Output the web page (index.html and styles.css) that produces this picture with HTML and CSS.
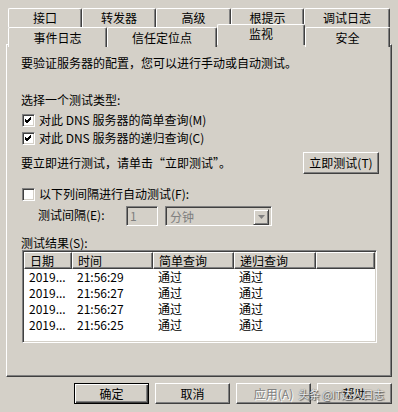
FILE: index.html
```html
<!DOCTYPE html>
<html lang="zh-CN">
<head>
  <meta charset="UTF-8" />
  <title>监视</title>
  <link rel="stylesheet" href="styles.css">
</head>
<body>
  <div class="dialog">
    <div class="tabs">
      <div class="tab-row row1">
        <div class="tab">接口</div>
        <div class="tab">转发器</div>
        <div class="tab">高级</div>
        <div class="tab">根提示</div>
        <div class="tab">调试日志</div>
      </div>
      <div class="tab-row row2">
        <div class="tab">事件日志</div>
        <div class="tab">信任定位点</div>
        <div class="tab active">监视</div>
        <div class="tab">安全</div>
      </div>
    </div>

    <div class="panel">
      <p class="intro">要验证服务器的配置，您可以进行手动或自动测试。</p>

      <p class="caption">选择一个测试类型:</p>
      <label class="check first">
        <span class="box"><svg viewBox="0 0 7 7" width="7" height="7"><path d="M0 2 L2 4 L6 0 M0 3 L2 5 L6 1 M0 4 L2 6 L6 2" stroke="#000" stroke-width="1" fill="none"/></svg></span>
        对此 DNS 服务器的简单查询(M)
      </label>
      <label class="check">
        <span class="box"><svg viewBox="0 0 7 7" width="7" height="7"><path d="M0 2 L2 4 L6 0 M0 3 L2 5 L6 1 M0 4 L2 6 L6 2" stroke="#000" stroke-width="1" fill="none"/></svg></span>
        对此 DNS 服务器的递归查询(C)
      </label>

      <div class="test-now">
        <span>要立即进行测试，请单击“立即测试”。</span>
        <button class="btn now">立即测试(T)</button>
      </div>

      <label class="check auto">
        <span class="box"></span>
        以下列间隔进行自动测试(F):
      </label>
      <div class="interval">
        <span class="interval-label">测试间隔(E):</span>
        <div class="field num">1</div>
        <div class="field combo">
          <span class="combo-text">分钟</span>
          <span class="combo-btn"><svg viewBox="0 0 7 4" width="7" height="4"><path d="M0 0 H7 L3.5 4 Z" fill="#808080"/></svg></span>
        </div>
      </div>

      <p class="results-label">测试结果(S):</p>
      <div class="list">
        <div class="list-head">
          <div class="hcell">日期</div>
          <div class="hcell">时间</div>
          <div class="hcell">简单查询</div>
          <div class="hcell">递归查询</div>
          <div class="hcell"></div>
        </div>
        <div class="list-row"><span>2019...</span><span>21:56:29</span><span>通过</span><span>通过</span></div>
        <div class="list-row"><span>2019...</span><span>21:56:27</span><span>通过</span><span>通过</span></div>
        <div class="list-row"><span>2019...</span><span>21:56:27</span><span>通过</span><span>通过</span></div>
        <div class="list-row"><span>2019...</span><span>21:56:25</span><span>通过</span><span>通过</span></div>
      </div>
    </div>

    <div class="buttons">
      <button class="btn default">确定</button>
      <button class="btn">取消</button>
      <button class="btn disabled">应用(A)</button>
      <button class="btn">帮助</button>
    </div>

    <div class="watermark">头条 @IT达人日志</div>
  </div>
</body>
</html>
```

FILE: styles.css
```css
body {
  margin: 0;
  width: 398px;
  height: 412px;
  overflow: hidden;
  background-color: #d4d0c8;
  font-family: "Noto Sans CJK SC", sans-serif;
  font-size: 12px;
  color: #000;
}
p {
  margin: 0;
}
.dialog {
  position: relative;
  width: 386px;
  height: 412px;
  padding: 8px 0 0 6px;
}

/* tabs */
.tabs {
  padding: 0 2px;
}
.tab-row {
  display: grid;
}
.row1 {
  grid-template-columns: 74px 74px 75px 73px 86px;
  height: 19px;
}
.row2 {
  grid-template-columns: 99px 110px 88px 85px;
  height: 20px;
  margin-top: -3px;
}
.tab {
  box-sizing: border-box;
  border-top: 1px solid #fff;
  border-left: 1px solid #fff;
  border-right: 1px solid #404040;
  border-radius: 2px 2px 0 0;
  box-shadow: inset -1px 0 #808080;
  background-color: #d4d0c8;
  text-align: center;
  line-height: 18px;
}
.row2 .tab {
  margin-top: 3px;
  line-height: 19px;
}
.row2 .tab.active {
  margin-top: 0;
  height: 21px;
  line-height: 18px;
  position: relative;
  z-index: 1;
}

/* panel */
.panel {
  box-sizing: border-box;
  width: 386px;
  height: 333px;
  padding: 9px 14px 0 14px;
  border: 1px solid;
  border-color: #fff #404040 #404040 #fff;
  box-shadow: inset -1px -1px #808080;
  line-height: 18px;
}
.caption {
  margin-top: 19px;
}
.check {
  display: flex;
  align-items: center;
  gap: 4px;
  height: 18px;
}
.check.first {
  margin-top: 2px;
}
.check.auto {
  margin-top: 11px;
}
.box {
  box-sizing: border-box;
  display: flex;
  align-items: center;
  justify-content: center;
  width: 13px;
  height: 13px;
  margin-left: 1px;
  background-color: #fff;
  border: 1px solid;
  border-color: #808080 #fff #fff #808080;
  box-shadow: inset 1px 1px #404040, inset -1px -1px #d4d0c8;
}
.test-now {
  display: flex;
  justify-content: space-between;
  align-items: center;
  margin-top: 5px;
  height: 22px;
}
.btn {
  box-sizing: border-box;
  font: inherit;
  color: #000;
  background-color: #d4d0c8;
  border: 1px solid;
  border-color: #fff #404040 #404040 #fff;
  box-shadow: inset -1px -1px #808080;
  padding: 0;
  width: 75px;
  height: 21px;
  line-height: 18px;
}
.btn.now {
  width: 76px;
  height: 22px;
  margin-right: -2px;
}
.btn.default {
  border: 1px solid #000;
  box-shadow: inset 1px 1px #fff, inset -1px -1px #404040, inset -2px -2px #808080;
}
.btn.disabled {
  color: #808080;
  text-shadow: 1px 1px #fff;
}

.interval {
  display: flex;
  align-items: center;
  margin-top: 3px;
  padding-left: 17px;
  height: 20px;
}
.interval-label {
  width: 88px;
  margin-top: -3px;
}
.field {
  box-sizing: border-box;
  height: 20px;
  border: 1px solid;
  border-color: #808080 #fff #fff #808080;
  box-shadow: inset 1px 1px #404040, inset -1px -1px #d4d0c8;
  background-color: #d4d0c8;
  color: #808080;
  line-height: 17px;
}
.num {
  width: 32px;
  padding-left: 3px;
}
.combo {
  display: flex;
  justify-content: space-between;
  width: 107px;
  margin-left: 7px;
  padding: 2px;
}
.combo-text {
  padding-left: 2px;
  line-height: 15px;
}
.combo-btn {
  box-sizing: border-box;
  display: flex;
  align-items: center;
  justify-content: center;
  width: 16px;
  height: 16px;
  border: 1px solid;
  border-color: #d4d0c8 #404040 #404040 #d4d0c8;
  box-shadow: inset 1px 1px #fff, inset -1px -1px #808080;
}

.results-label {
  margin-top: 10px;
  line-height: 14px;
  height: 14px;
}
.list {
  box-sizing: border-box;
  width: 355px;
  height: 93px;
  margin-left: 1px;
  border: 1px solid;
  border-color: #808080 #fff #fff #808080;
  box-shadow: inset 1px 1px #404040, inset -1px -1px #d4d0c8;
  background-color: #fff;
  padding: 1px;
}
.list-head,
.list-row {
  display: grid;
  grid-template-columns: 48px 81px 81px 82px 1fr;
}
.hcell {
  box-sizing: border-box;
  height: 17px;
  padding-left: 5px;
  line-height: 16px;
  background-color: #d4d0c8;
  border-top: 1px solid #fff;
  border-left: 1px solid #fff;
  border-right: 1px solid #404040;
  border-bottom: 1px solid #404040;
  box-shadow: inset -1px -1px #808080;
}
.list-row {
  height: 16px;
  line-height: 16px;
}
.list-row span {
  padding-left: 5px;
}

.buttons {
  display: flex;
  justify-content: flex-end;
  gap: 6px;
  margin-top: 6px;
}

.watermark {
  position: absolute;
  right: 8px;
  top: 386px;
  font-size: 11px;
  line-height: 16px;
  letter-spacing: -0.3px;
  color: #f0f0f0;
  text-shadow: 0 0 1px #333, 1px 1px 1px #555;
}
```
